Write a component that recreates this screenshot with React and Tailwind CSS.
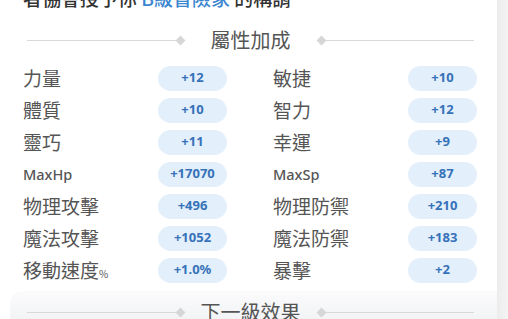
import React from 'react';

const stats = [
  ['力量', '+12', '敏捷', '+10'],
  ['體質', '+10', '智力', '+12'],
  ['靈巧', '+11', '幸運', '+9'],
  ['MaxHp', '+17070', 'MaxSp', '+87'],
  ['物理攻擊', '+496', '物理防禦', '+210'],
  ['魔法攻擊', '+1052', '魔法防禦', '+183'],
  ['移動速度%', '+1.0%', '暴擊', '+2'],
];

const cjk = { fontFamily: '"Noto Sans CJK TC", "Noto Sans", sans-serif' };
const latin = { fontFamily: '"Noto Sans", "Noto Sans CJK TC", sans-serif' };

function Label({ text }) {
  if (text.startsWith('Max')) {
    return <span className="text-[14.5px] font-medium text-[#555]" style={latin}>{text}</span>;
  }
  if (text.endsWith('%')) {
    return (
      <span className="text-[19px] text-[#555]" style={cjk}>
        {text.slice(0, -1)}<span className="text-[10px]">%</span>
      </span>
    );
  }
  return <span className="text-[19px] text-[#555]" style={cjk}>{text}</span>;
}

function Stat({ label, value }) {
  return (
    <div className="flex items-center h-[32px]">
      <div className="w-[135px] leading-none"><Label text={label} /></div>
      <div className="w-[69px] h-[25px] rounded-full bg-[#e3effb] flex items-center justify-center text-[13px] font-bold text-[#3672b9]" style={latin}>
        {value}
      </div>
    </div>
  );
}

function Divider({ title }) {
  return (
    <div className="flex items-center ml-[27px] mr-[23px]">
      <div className="flex-1 h-px bg-[#d9d9d9]" />
      <div className="w-[7px] h-[7px] rotate-45 bg-[#d6d6d6]" />
      <div className="w-[134px] h-[20px] text-center text-[20px] leading-[20px] text-[#555]" style={cjk}>{title}</div>
      <div className="w-[7px] h-[7px] rotate-45 bg-[#d6d6d6]" />
      <div className="flex-1 h-px bg-[#d9d9d9]" />
    </div>
  );
}

export default function App() {
  return (
    <div className="w-[508px] h-[319px] overflow-hidden bg-white flex">
      <div className="w-[497px] flex flex-col">
        <div className="h-[10px] shrink-0 overflow-hidden">
          <div className="-translate-y-[13px] ml-[23px] text-[19px] leading-[22px] font-medium text-[#333] whitespace-nowrap" style={cjk}>
            者協會授予你 <span className="text-[#3a86cf]">B級冒險家</span> 的稱謂
          </div>
        </div>
        <div className="mt-[20px] shrink-0">
          <Divider title="屬性加成" />
        </div>
        <div className="mt-[12px] ml-[23px] shrink-0 grid grid-cols-[250px_250px]">
          {stats.map(([l1, v1, l2, v2]) => (
            <React.Fragment key={l1}>
              <Stat label={l1} value={v1} />
              <Stat label={l2} value={v2} />
            </React.Fragment>
          ))}
        </div>
        <div className="mt-[5px] ml-[10px] shrink-0 h-[40px] rounded-tl-xl bg-gradient-to-b from-[#fbfbfc] to-[#eef0f3] pt-[11px]">
          <div className="-ml-[10px]">
            <Divider title="下一級效果" />
          </div>
        </div>
      </div>
      <div className="flex-1 bg-gradient-to-r from-[#ececec] to-[#f4f4f4]" />
    </div>
  );
}
